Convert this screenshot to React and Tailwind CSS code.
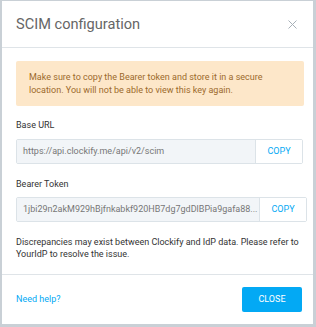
export default function App() {
  return (
    <div
      className="w-[316px] h-[327px] bg-[#c9d0d6] pl-[2px] pt-[1px] overflow-hidden"
      style={{ fontFamily: 'Roboto, "Liberation Sans", sans-serif' }}
    >
      <div className="w-[311px] h-[323px] bg-white flex flex-col">
        {/* Header */}
        <div className="h-[47px] flex items-center justify-between px-[14px] border-b border-[#dfe4e8]">
          <div className="text-[14.6px] text-[#666666] leading-none">SCIM configuration</div>
          <svg width="9" height="9" viewBox="0 0 9 9" className="mr-[2px]">
            <path d="M0.5 0.5 L8.5 8.5 M8.5 0.5 L0.5 8.5" stroke="#a7b0b8" strokeWidth="1" />
          </svg>
        </div>

        {/* Body */}
        <div className="px-[14px] flex-1 text-[9px]">
          <div className="mt-[13px] w-[288px] h-[45px] bg-[#fde7c9] rounded-[2px] pl-[13px] flex flex-col justify-center leading-[13px] text-[#9c6a2c] whitespace-nowrap">
            <div>Make sure to copy the Bearer token and store it in a secure</div>
            <div>location. You will not be able to view this key again.</div>
          </div>

          <div className="mt-[12px] leading-[14px] text-[#333333]">Base URL</div>
          <div className="mt-[7px] w-[287px] h-[25px] flex border border-[#dce3e8] rounded-[2px]">
            <div className="flex-1 bg-[#f2f5f8] flex items-center pl-[6px] text-[#777777] whitespace-nowrap overflow-hidden">
              https://api.clockify.me/api/v2/scim
            </div>
            <div className="w-[47px] border-l border-[#dce3e8] bg-white flex items-center justify-center text-[#03a9f4]">
              COPY
            </div>
          </div>

          <div className="mt-[13px] leading-[14px] text-[#333333]">Bearer Token</div>
          <div className="mt-[6px] w-[291px] h-[25px] flex border border-[#dce3e8] rounded-[2px]">
            <div className="flex-1 min-w-0 bg-[#f2f5f8] flex items-center pl-[6px] text-[#777777] whitespace-nowrap">
              1jbi29n2akM929hBjfnkabkf920HB7dg7gdDlBPia9gafa88...
            </div>
            <div className="w-[47px] border-l border-[#dce3e8] bg-white flex items-center justify-center text-[#03a9f4]">
              COPY
            </div>
          </div>

          <div className="mt-[14px] leading-[12px] text-[#333333] whitespace-nowrap">
            <div>Discrepancies may exist between Clockify and IdP data. Please refer to</div>
            <div>YourIdP to resolve the issue.</div>
          </div>
        </div>

        {/* Footer */}
        <div className="h-[50px] border-t border-[#dfe4e8] px-[14px] pt-[12px] flex items-start justify-between text-[9px]">
          <div className="h-[25px] flex items-center text-[#03a9f4]">Need help?</div>
          <div className="w-[60px] h-[25px] bg-[#03a9f4] rounded-[2px] flex items-center justify-center text-white mr-[-3px]">
            CLOSE
          </div>
        </div>
      </div>
    </div>
  );
}
